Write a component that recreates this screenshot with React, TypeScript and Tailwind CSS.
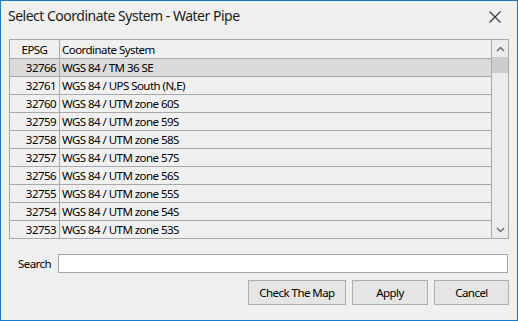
import React from "react";

const rows: [string, string][] = [
  ["32766", "WGS 84 / TM 36 SE"],
  ["32761", "WGS 84 / UPS South (N,E)"],
  ["32760", "WGS 84 / UTM zone 60S"],
  ["32759", "WGS 84 / UTM zone 59S"],
  ["32758", "WGS 84 / UTM zone 58S"],
  ["32757", "WGS 84 / UTM zone 57S"],
  ["32756", "WGS 84 / UTM zone 56S"],
  ["32755", "WGS 84 / UTM zone 55S"],
  ["32754", "WGS 84 / UTM zone 54S"],
  ["32753", "WGS 84 / UTM zone 53S"],
];

export default function App() {
  return (
    <div className="w-[518px] h-[321px] bg-[#f0f0f0] border border-[#1979ca] flex flex-col text-black font-['Noto_Sans',sans-serif] text-[11.5px] tracking-[-0.55px]">
      {/* Title bar */}
      <div className="h-[38px] flex items-start justify-between">
        <div className="pl-[7px] pt-[5px] text-[14px] leading-[20px] tracking-[-0.5px] text-[#1b1b1b]">
          Select Coordinate System - Water Pipe
        </div>
        <div className="mr-[16px] mt-[10px]">
          <svg width="12" height="12" viewBox="0 0 12 12">
            <path d="M0.5 0.5 L11.5 11.5 M11.5 0.5 L0.5 11.5" stroke="#333" strokeWidth="1.1" fill="none" />
          </svg>
        </div>
      </div>

      {/* Grid */}
      <div className="ml-[8px] w-[500px] h-[200px] border border-[#a8a8a8] flex">
        <div className="flex-1 flex flex-col leading-[17px]">
          <div className="h-[19px] flex border-b border-[#a8a8a8]">
            <div className="w-[50px] border-r border-[#a8a8a8] text-center pt-[1px]">EPSG</div>
            <div className="flex-1 pl-[2px] pt-[1px]">Coordinate System</div>
          </div>
          {rows.map(([code, name], i) => (
            <div
              key={code}
              className={"h-[18px] flex border-b border-[#a8a8a8] " + (i === 0 ? "bg-[#dadada]" : "")}
            >
              <div className="w-[50px] border-r border-[#a8a8a8] text-right pr-[3px]">{code}</div>
              <div className="flex-1 pl-[2px]">{name}</div>
            </div>
          ))}
        </div>
        {/* Scrollbar */}
        <div className="w-[17px] bg-[#ececec] border-l border-[#a8a8a8] flex flex-col">
          <div className="h-[17px] flex items-center justify-center">
            <svg width="9" height="6" viewBox="0 0 9 6">
              <path d="M1 5 L4.5 1.5 L8 5" stroke="#707070" strokeWidth="1.5" fill="none" />
            </svg>
          </div>
          <div className="h-[16px] bg-[#cdcdcd]" />
          <div className="flex-1" />
          <div className="h-[17px] flex items-center justify-center">
            <svg width="9" height="6" viewBox="0 0 9 6">
              <path d="M1 1 L4.5 4.5 L8 1" stroke="#707070" strokeWidth="1.5" fill="none" />
            </svg>
          </div>
        </div>
      </div>

      {/* Search */}
      <div className="mt-[15px] flex items-center">
        <div className="w-[57px] pl-[17px] leading-[17px]">Search</div>
        <div className="w-[450px] h-[19px] bg-white border border-[#a8a8a8]" />
      </div>

      {/* Buttons */}
      <div className="mt-[7px] flex justify-end gap-[6px] pr-[8px]">
        <div className="w-[98px] h-[25px] border border-[#adadad] bg-[#e5e5e5] flex items-center justify-center">
          Check The Map
        </div>
        <div className="w-[76px] h-[25px] border border-[#adadad] bg-[#e5e5e5] flex items-center justify-center">
          Apply
        </div>
        <div className="w-[75px] h-[25px] border border-[#adadad] bg-[#e5e5e5] flex items-center justify-center">
          Cancel
        </div>
      </div>
    </div>
  );
}
